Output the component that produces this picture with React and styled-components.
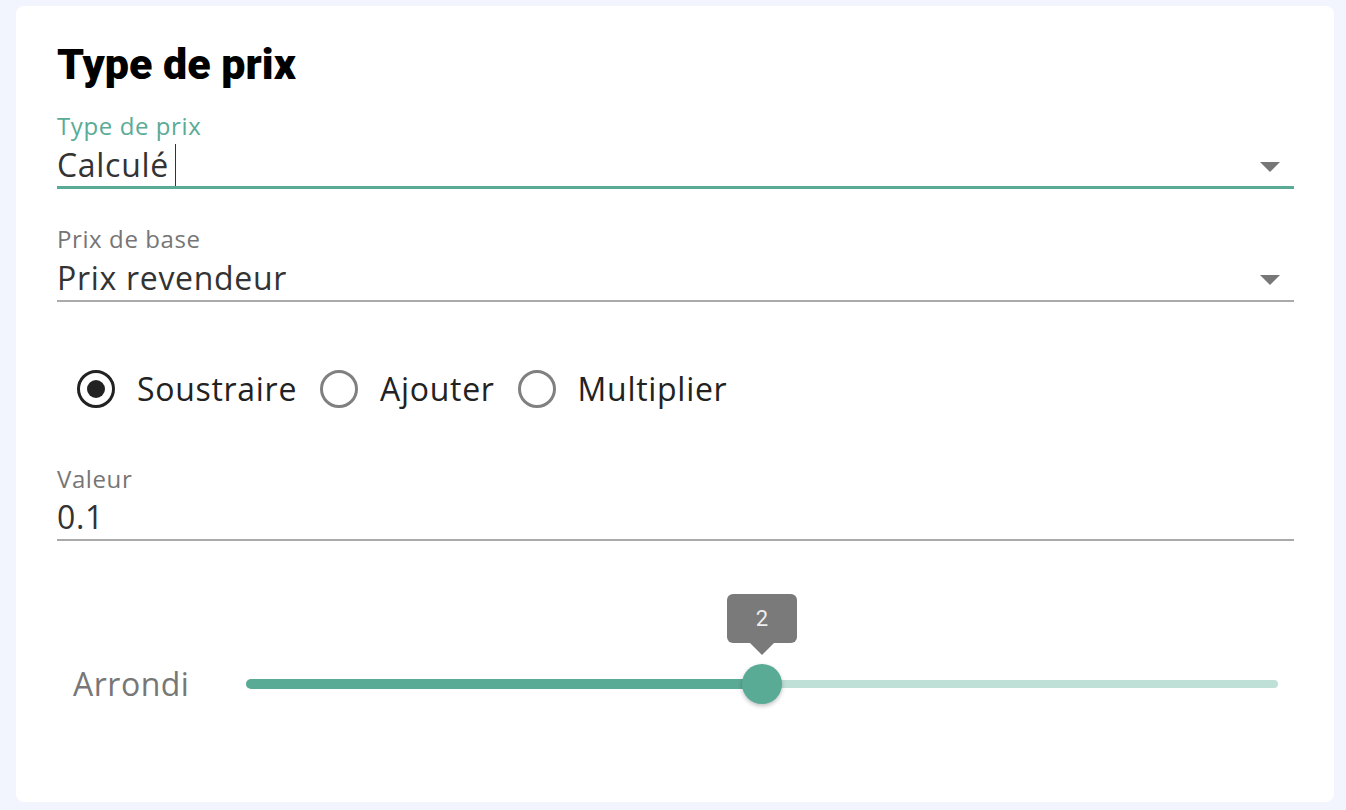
import React from 'react';
import styled, { createGlobalStyle } from 'styled-components';

const GlobalStyle = createGlobalStyle`
  html, body {
    margin: 0;
    background: #f2f5fd;
  }
  body {
    font-family: "Open Sans", "Noto Sans", sans-serif;
  }
`;

const TEAL = '#5aab96';

const Page = styled.div`
  padding: 6px 12px 8px 16px;
`;

const Card = styled.div`
  box-sizing: border-box;
  height: 796px;
  background: #fff;
  border-radius: 8px;
  padding: 37px 40px 0 41px;
`;

const Title = styled.h2`
  margin: 0;
  font-family: Roboto, "Liberation Sans", sans-serif;
  font-weight: 900;
  font-size: 43px;
  line-height: 43px;
  color: #000;
`;

const Field = styled.div`
  margin-top: ${p => p.$gap}px;
`;

const Label = styled.div`
  font-size: 24px;
  line-height: 28.8px;
  letter-spacing: 0.6px;
  color: ${p => (p.$focused ? TEAL : '#767676')};
`;

const InputRow = styled.div`
  display: flex;
  align-items: center;
  height: 40px;
  margin-top: 4px;
  padding-bottom: ${p => (p.$focused ? 1 : 2)}px;
  border-bottom: ${p => (p.$focused ? `3px solid ${TEAL}` : '2px solid #aaa')};
`;

const Value = styled.div`
  flex: 1;
  display: flex;
  align-items: center;
  font-size: 32px;
  line-height: 40px;
  letter-spacing: 0.7px;
  color: #333;
`;

const Caret = styled.span`
  display: inline-block;
  width: 1.5px;
  height: 42px;
  margin-left: 6px;
  background: #333;
`;

const Arrow = styled.svg`
  width: 20px;
  height: 10px;
  margin-right: 14px;
  margin-top: 4px;
  fill: #777;
`;

const RadioGroup = styled.div`
  display: flex;
  align-items: center;
  gap: 23px;
  margin-top: 68px;
  padding-left: 20px;
  height: 38px;
`;

const RadioOption = styled.label`
  display: flex;
  align-items: center;
  gap: 22px;
  font-size: 32px;
  line-height: 40px;
  letter-spacing: 0.7px;
  color: #222;
`;

const RadioRing = styled.span`
  box-sizing: border-box;
  width: 38px;
  height: 38px;
  border-radius: 50%;
  border: 3.5px solid ${p => (p.$checked ? '#222' : '#808080')};
  display: flex;
  align-items: center;
  justify-content: center;

  &::after {
    content: '';
    width: 18px;
    height: 18px;
    border-radius: 50%;
    background: ${p => (p.$checked ? '#222' : 'transparent')};
  }
`;

const SliderRow = styled.div`
  display: flex;
  align-items: center;
  height: 40px;
  margin-top: 123px;
  padding: 0 16px;
`;

const SliderLabel = styled.span`
  font-size: 32px;
  line-height: 40px;
  letter-spacing: 0.5px;
  color: #777;
  width: 173px;
`;

const SliderTrack = styled.div`
  position: relative;
  flex: 1;
  height: 8px;
  border-radius: 4px;
  background: #bfe0d7;
`;

const SliderFill = styled.div`
  position: absolute;
  left: 0;
  top: -1px;
  height: 10px;
  border-radius: 5px;
  background: ${TEAL};
`;

const Thumb = styled.div`
  position: absolute;
  top: 50%;
  width: 40px;
  height: 40px;
  border-radius: 50%;
  background: ${TEAL};
  box-shadow: 0 2px 4px rgba(0, 0, 0, 0.25);
  transform: translate(-50%, -50%);
`;

const Bubble = styled.div`
  position: absolute;
  left: 50%;
  bottom: 61px;
  width: 70px;
  height: 49px;
  transform: translateX(-50%);
  border-radius: 6px;
  background: #7a7a7a;
  color: #eee;
  font-family: Roboto, sans-serif;
  font-size: 22px;
  display: flex;
  align-items: center;
  justify-content: center;

  &::after {
    content: '';
    position: absolute;
    left: 50%;
    top: 100%;
    transform: translateX(-50%);
    border-left: 12px solid transparent;
    border-right: 12px solid transparent;
    border-top: 12px solid #7a7a7a;
  }
`;

const DropArrow = () => (
  <Arrow viewBox="0 0 20 10">
    <polygon points="0,0 20,0 10,10" />
  </Arrow>
);

const Radio = ({ label, checked }) => (
  <RadioOption>
    <RadioRing $checked={checked} />
    {label}
  </RadioOption>
);

export default function App() {
  const value = 2;
  const max = 4;
  const pct = (value / max) * 100;

  return (
    <>
      <GlobalStyle />
      <Page>
        <Card>
          <Title>Type de prix</Title>

          <Field $gap={26}>
            <Label $focused>Type de prix</Label>
            <InputRow $focused>
              <Value>
                Calculé
                <Caret />
              </Value>
              <DropArrow />
            </InputRow>
          </Field>

          <Field $gap={36}>
            <Label>Prix de base</Label>
            <InputRow>
              <Value>Prix revendeur</Value>
              <DropArrow />
            </InputRow>
          </Field>

          <RadioGroup>
            <Radio label="Soustraire" checked />
            <Radio label="Ajouter" />
            <Radio label="Multiplier" />
          </RadioGroup>

          <Field $gap={57}>
            <Label>Valeur</Label>
            <InputRow>
              <Value>0.1</Value>
            </InputRow>
          </Field>

          <SliderRow>
            <SliderLabel>Arrondi</SliderLabel>
            <SliderTrack>
              <SliderFill style={{ width: `${pct}%` }} />
              <Thumb style={{ left: `${pct}%` }}>
                <Bubble>{value}</Bubble>
              </Thumb>
            </SliderTrack>
          </SliderRow>
        </Card>
      </Page>
    </>
  );
}
